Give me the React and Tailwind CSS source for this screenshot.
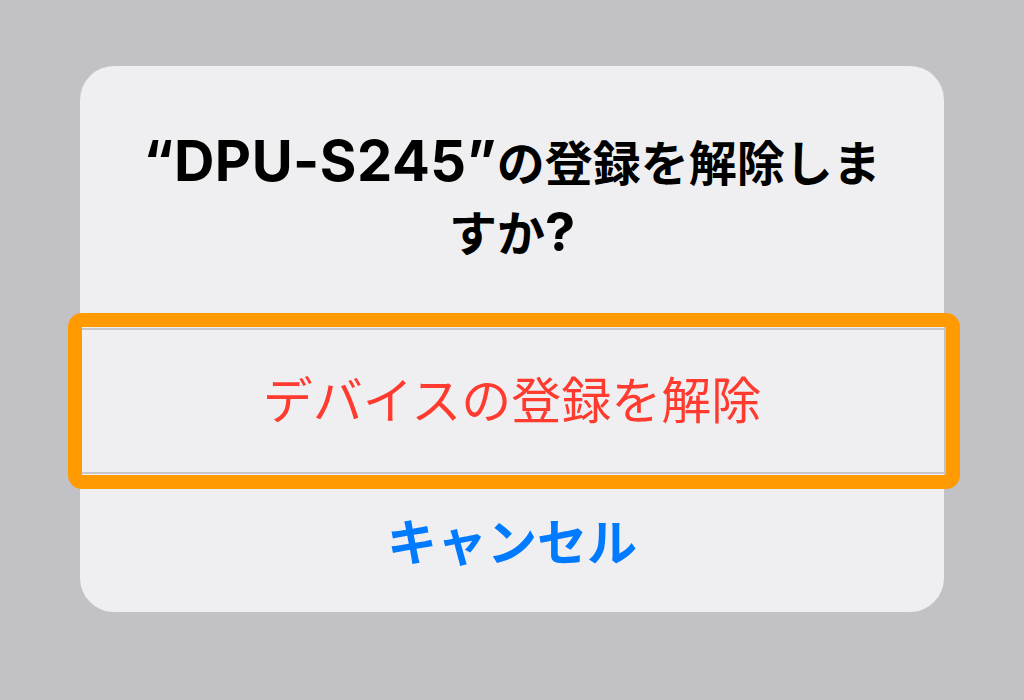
import React from 'react';

const font = { fontFamily: '"Inter", "Noto Sans CJK JP", sans-serif' };

export default function App() {
  return (
    <div className="min-h-[700px] w-full bg-[#c2c1c6] flex justify-center pt-[66px]" style={font}>
      <div className="relative w-[864px] h-[546px] bg-[#efeff1] rounded-[34px] flex flex-col">
        {/* Title */}
        <div className="h-[262px] px-[60px] pt-[63px] text-center">
          <h2 className="text-[48px] leading-[70px] font-bold text-black">
            <span className="whitespace-nowrap text-[56px] leading-none tracking-[0.5px]">“DPU-S245”</span>の登録を解除しますか<span className="text-[54px] leading-none">?</span>
          </h2>
        </div>

        {/* Actions */}
        <button className="h-[144px] border-t-2 border-[#c8c8cb] flex items-center justify-center text-[50px] text-[#ff3b30] font-normal">
          デバイスの登録を解除
        </button>
        <button className="flex-1 border-t-2 border-[#c8c8cb] flex items-center justify-center text-[50px] text-[#007aff] font-bold">
          キャンセル
        </button>

        {/* Highlight annotation */}
        <div className="absolute left-[-12px] top-[247px] w-[892px] h-[176px] border-[14px] border-[#ff9a00] rounded-[14px] pointer-events-none" />
      </div>
    </div>
  );
}
